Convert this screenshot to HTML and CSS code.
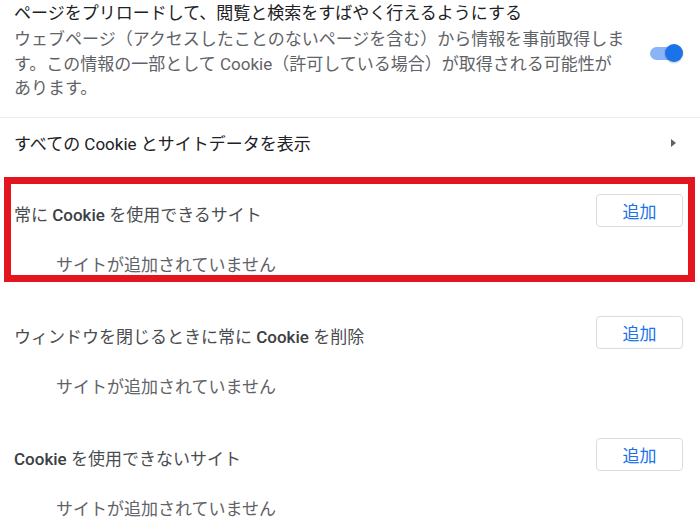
FILE: index.html
```html
<!DOCTYPE html>
<html lang="ja">
<head>
<meta charset="utf-8">
<title>Cookie settings</title>
<link rel="stylesheet" href="styles.css">
</head>
<body>
<div class="page">
  <div class="preload">
    <div class="preload-text">
      <div class="label">ページをプリロードして、閲覧と検索をすばやく行えるようにする</div>
      <div class="sub">ウェブページ（アクセスしたことのないページを含む）から情報を事前取得します。この情報の一部として Cookie（許可している場合）が取得される可能性があります。</div>
    </div>
    <div class="toggle"><span class="track"></span><span class="knob"></span></div>
  </div>
  <div class="link-row">
    <span class="link-label">すべての Cookie とサイトデータを表示</span>
    <span class="arrow"></span>
  </div>
  <div class="section highlighted">
    <div class="section-head">
      <span class="head-label">常に <b>Cookie</b> を使用できるサイト</span>
      <button class="add">追加</button>
    </div>
    <div class="empty">サイトが追加されていません</div>
    <div class="highlight"></div>
  </div>
  <div class="section">
    <div class="section-head">
      <span class="head-label">ウィンドウを閉じるときに常に <b>Cookie</b> を削除</span>
      <button class="add">追加</button>
    </div>
    <div class="empty">サイトが追加されていません</div>
  </div>
  <div class="section">
    <div class="section-head">
      <span class="head-label"><b>Cookie</b> を使用できないサイト</span>
      <button class="add">追加</button>
    </div>
    <div class="empty">サイトが追加されていません</div>
  </div>
</div>
</body>
</html>
```

FILE: styles.css
```css
html, body {
  margin: 0;
  padding: 0;
  background: #ffffff;
}

body {
  font-family: Roboto, "Noto Sans CJK JP", sans-serif;
  font-size: 17px;
  color: #3c4043;
  overflow: hidden;
}

.page {
  width: 700px;
  display: flex;
  flex-direction: column;
}

.preload {
  display: flex;
  align-items: center;
  padding: 0 17px 16px 14px;
  border-bottom: 1px solid #ececec;
}

.preload-text {
  width: 613px;
}

.label {
  line-height: 27px;
  color: #202124;
}

.sub {
  line-height: 24.5px;
  color: #5f6368;
}

.toggle {
  position: relative;
  width: 34px;
  height: 18px;
  margin-left: auto;
  margin-top: 6px;
}

.track {
  position: absolute;
  left: 1px;
  top: 3px;
  width: 30px;
  height: 13px;
  border-radius: 7px;
  background: #8ab4f8;
}

.knob {
  position: absolute;
  right: 0;
  top: 0;
  width: 18px;
  height: 18px;
  border-radius: 50%;
  background: #1a73e8;
  box-shadow: 0 1px 2px rgba(0, 0, 0, 0.25);
}

.link-row {
  display: flex;
  align-items: center;
  height: 50px;
  padding: 0 24px 0 14px;
  color: #202124;
}

.arrow {
  margin-left: auto;
  width: 0;
  height: 0;
  border-top: 4.5px solid transparent;
  border-bottom: 4.5px solid transparent;
  border-left: 5px solid #5f6368;
}

.section {
  position: relative;
  margin-top: 21px;
  display: flex;
  flex-direction: column;
}

.section-head {
  display: flex;
  align-items: center;
  height: 44px;
  padding: 0 17px 0 14px;
}

.head-label {
  padding-top: 5px;
  color: #4a4d50;
}

.head-label b {
  font-weight: 500;
  color: #3c4043;
}

.add {
  margin-left: auto;
  width: 87px;
  height: 33px;
  border: 1px solid #dadce0;
  border-radius: 4px;
  background: #ffffff;
  color: #1a73e8;
  font-family: Roboto, "Noto Sans CJK JP", sans-serif;
  font-size: 17px;
  padding: 0;
}

.empty {
  padding: 7px 0 0 56px;
  line-height: 50px;
  color: #5f6368;
}

.highlight {
  position: absolute;
  left: 4px;
  right: 5px;
  top: -12px;
  bottom: 8px;
  border: 7px solid #e3151f;
  pointer-events: none;
}
```
